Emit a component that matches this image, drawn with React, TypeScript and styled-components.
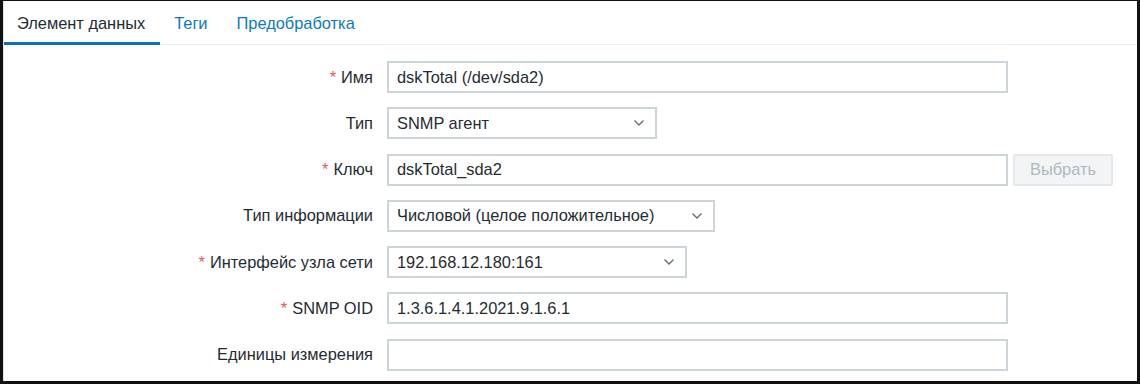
import React from 'react'
import styled, { createGlobalStyle } from 'styled-components'

const GlobalStyle = createGlobalStyle`
  html, body {
    margin: 0;
    padding: 0;
    background: #fff;
  }
  body {
    font-family: 'Liberation Sans', Arial, sans-serif;
    font-size: 16.4px;
    color: #1f2c33;
  }
`

type Field = {
  label: string
  required?: boolean
  value: string
  kind: 'input' | 'select'
  width: number
  button?: string
}

const fields: Field[] = [
  { label: 'Имя', required: true, value: 'dskTotal (/dev/sda2)', kind: 'input', width: 621 },
  { label: 'Тип', value: 'SNMP агент', kind: 'select', width: 270 },
  { label: 'Ключ', required: true, value: 'dskTotal_sda2', kind: 'input', width: 621, button: 'Выбрать' },
  { label: 'Тип информации', value: 'Числовой (целое положительное)', kind: 'select', width: 328 },
  { label: 'Интерфейс узла сети', required: true, value: '192.168.12.180:161', kind: 'select', width: 300 },
  { label: 'SNMP OID', required: true, value: '1.3.6.1.4.1.2021.9.1.6.1', kind: 'input', width: 621 },
  { label: 'Единицы измерения', value: '', kind: 'input', width: 621 },
]

const tabs = ['Элемент данных', 'Теги', 'Предобработка']

export default function App() {
  return (
    <>
      <GlobalStyle />
      <Frame>
        <TabBar>
          {tabs.map((t, i) => (
            <Tab key={t} active={i === 0}>
              {t}
            </Tab>
          ))}
        </TabBar>

        <Form>
          {fields.map((f) => (
            <React.Fragment key={f.label}>
              <Label>
                {f.required && <Star>*</Star>}
                {f.label}
              </Label>
              <Controls>
                <Box width={f.width}>
                  <span>{f.value}</span>
                  {f.kind === 'select' && (
                    <Chevron viewBox="0 0 12 8">
                      <path d="M1.5 1.5 L6 6 L10.5 1.5" fill="none" stroke="#5b6b73" strokeWidth="1.3" />
                    </Chevron>
                  )}
                </Box>
                {f.button && <GhostButton disabled>{f.button}</GhostButton>}
              </Controls>
            </React.Fragment>
          ))}
        </Form>
      </Frame>
    </>
  )
}

const Frame = styled.div`
  box-sizing: border-box;
  width: 1140px;
  height: 384px;
  border-style: solid;
  border-color: #111;
  border-width: 1px 3px 3px 3px;
  background: #fff;
  box-shadow: inset 1px 0 0 #dfe4e7;
  overflow: hidden;
`

const TabBar = styled.div`
  display: flex;
  height: 43px;
  padding-left: 1px;
  border-bottom: 1px solid #ebeef0;
`

const Tab = styled.div<{ active?: boolean }>`
  display: flex;
  align-items: center;
  padding: 4px 15px 0 13px;
  margin-right: 1px;
  color: ${(p) => (p.active ? '#1f2c33' : '#0a7bc1')};
  border-bottom: 3px solid ${(p) => (p.active ? '#0a72b8' : 'transparent')};
  box-sizing: border-box;
  height: 44px;
`

const Form = styled.div`
  display: grid;
  grid-template-columns: 370px auto;
  column-gap: 14px;
  row-gap: 14.3px;
  padding-top: 16px;
`

const Label = styled.div`
  display: flex;
  align-items: center;
  justify-content: flex-end;
  height: 32px;
  white-space: nowrap;
`

const Star = styled.span`
  color: #e45959;
  margin-right: 5px;
`

const Controls = styled.div`
  display: flex;
  align-items: center;
  gap: 5px;
`

const Box = styled.div<{ width: number }>`
  box-sizing: border-box;
  width: ${(p) => p.width}px;
  height: 32px;
  display: flex;
  align-items: center;
  justify-content: space-between;
  padding: 0 10px 0 8px;
  border: 2px solid #cad4d9;
  background: #fff;
  color: #1f2c33;
`

const Chevron = styled.svg`
  width: 12px;
  height: 8px;
`

const GhostButton = styled.button`
  box-sizing: border-box;
  width: 100px;
  height: 32px;
  font-family: inherit;
  font-size: 16.4px;
  color: #acbbc2;
  background: #f2f4f5;
  border: 2px solid #e3e8ea;
  border-radius: 2px;
`
